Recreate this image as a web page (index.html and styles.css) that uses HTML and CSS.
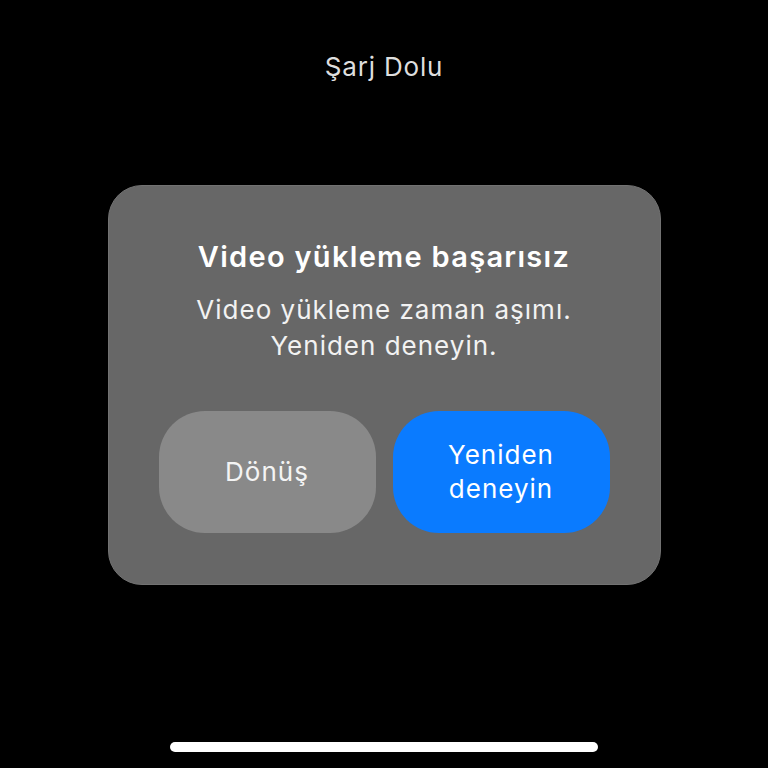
FILE: index.html
```html
<!DOCTYPE html>
<html lang="tr">
<head>
<meta charset="utf-8">
<link rel="stylesheet" href="styles.css">
</head>
<body>
<div class="screen">
  <div class="status">Şarj Dolu</div>
  <div class="card">
    <div class="title">Video yükleme başarısız</div>
    <div class="message">Video yükleme zaman aşımı.<br>Yeniden deneyin.</div>
    <div class="actions">
      <div class="btn btn-secondary">Dönüş</div>
      <div class="btn btn-primary">Yeniden<br>deneyin</div>
    </div>
  </div>
  <div class="spacer"></div>
  <div class="home-bar"></div>
</div>
</body>
</html>
```

FILE: styles.css
```css
html, body {
  margin: 0;
  padding: 0;
  background: #000;
}
.screen {
  width: 768px;
  height: 768px;
  display: flex;
  flex-direction: column;
  align-items: center;
  font-family: Inter, "Noto Sans", sans-serif;
  color: #fff;
  box-sizing: border-box;
}
.status {
  margin-top: 52px;
  font-size: 26px;
  line-height: 30px;
  letter-spacing: 0.8px;
  color: #dedede;
}
.card {
  margin-top: 103px;
  width: 553px;
  height: 400px;
  box-sizing: border-box;
  background: #676767;
  border: 1px solid #727272;
  border-radius: 34px;
  padding: 53px 50px 0;
  display: flex;
  flex-direction: column;
  align-items: center;
  text-align: center;
}
.title {
  font-size: 29px;
  font-weight: 600;
  line-height: 36px;
  letter-spacing: 1.3px;
}
.message {
  margin-top: 17px;
  font-size: 26px;
  line-height: 36px;
  letter-spacing: 1px;
  color: #f2f2f2;
}
.actions {
  margin-top: 47px;
  display: flex;
  gap: 17px;
  width: 100%;
}
.btn {
  flex: 1;
  height: 122px;
  border-radius: 46px;
  display: flex;
  align-items: center;
  justify-content: center;
  font-size: 26px;
  line-height: 34px;
  letter-spacing: 1px;
  text-align: center;
}
.btn-secondary {
  background: #898989;
  color: #f4f4f4;
}
.btn-primary {
  background: #0a7bff;
  color: #fff;
}
.spacer {
  flex: 1;
}
.home-bar {
  width: 428px;
  height: 10px;
  border-radius: 5px;
  background: #fff;
  margin-bottom: 16px;
}
```
